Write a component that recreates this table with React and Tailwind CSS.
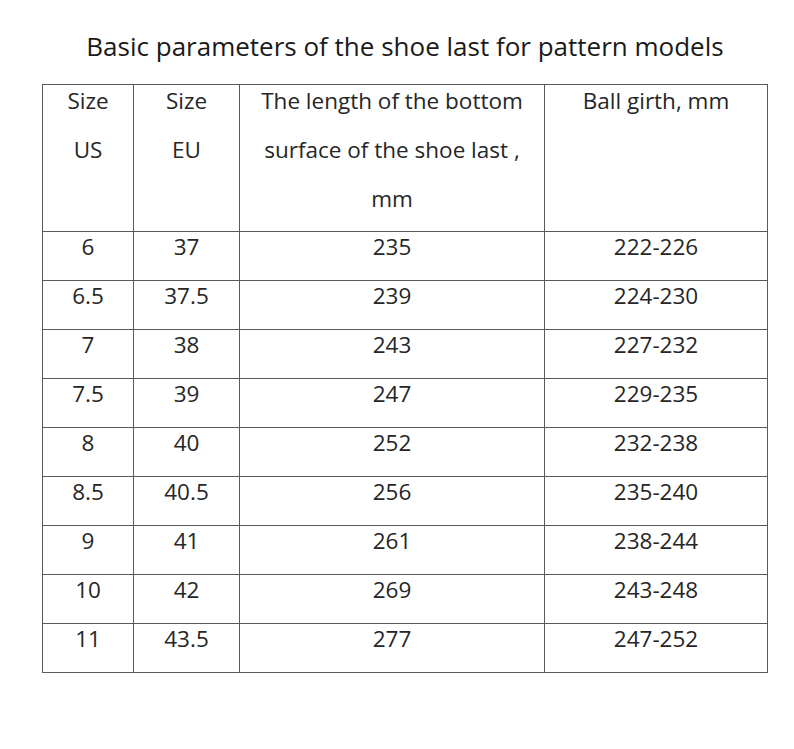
import React from "react";

const rows = [
  ["6", "37", "235", "222-226"],
  ["6.5", "37.5", "239", "224-230"],
  ["7", "38", "243", "227-232"],
  ["7.5", "39", "247", "229-235"],
  ["8", "40", "252", "232-238"],
  ["8.5", "40.5", "256", "235-240"],
  ["9", "41", "261", "238-244"],
  ["10", "42", "269", "243-248"],
  ["11", "43.5", "277", "247-252"],
];

const cols = "grid grid-cols-[91px_106px_305px_223px]";
const cell = "border-r border-b border-[#5a5a5a] text-center leading-[29px]";

function HeaderCell({ lines }) {
  return (
    <div className={cell + " h-[147px] pt-[1px] flex flex-col gap-[20px]"}>
      {lines.map((l, i) => (
        <div key={i}>{l}</div>
      ))}
    </div>
  );
}

export default function App() {
  return (
    <div
      className="w-[794px] h-[749px] bg-white text-[#262626] pt-[28px]"
      style={{ fontFamily: "'Open Sans', sans-serif" }}
    >
      <div className="w-[726px] ml-[42px] text-center text-[26px] leading-[36px] text-[#1a1a1a]">
        Basic parameters of the shoe last for pattern models
      </div>
      <div className="mt-[20px] ml-[42px] w-[726px] border-l border-t border-[#5a5a5a] text-[22.5px]">
        <div className={cols}>
          <HeaderCell lines={["Size", "US"]} />
          <HeaderCell lines={["Size", "EU"]} />
          <HeaderCell
            lines={["The length of the bottom", "surface of the shoe last ,", "mm"]}
          />
          <HeaderCell lines={["Ball girth, mm"]} />
        </div>
        {rows.map((r, i) => (
          <div key={i} className={cols}>
            {r.map((c, j) => (
              <div key={j} className={cell + " h-[49px]"}>
                {c}
              </div>
            ))}
          </div>
        ))}
      </div>
    </div>
  );
}
